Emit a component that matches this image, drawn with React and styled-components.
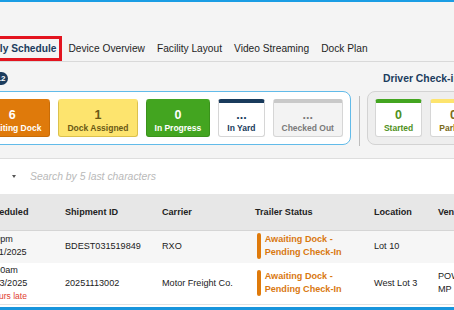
import React from "react";
import styled, { createGlobalStyle } from "styled-components";

const colors = {
  blue: "#1a9de4",
  navy: "#1b3c5e",
  text: "#222222",
  page: "#f4f4f4",
  orange: "#df7a0b",
};

const tones = {
  orange: { bg: "#df7a0b", border: "#c86c07", bar: "#df7a0b", text: "#ffffff" },
  yellow: { bg: "#fde46e", border: "#dcc14c", bar: "#fde46e", text: "#6a5915" },
  green: { bg: "#43a520", border: "#3a921b", bar: "#43a520", text: "#ffffff" },
  navy: { bg: "#ffffff", border: "#d6d6d6", bar: "#193b5c", text: "#193b5c" },
  gray: { bg: "#f3f3f3", border: "#d6d6d6", bar: "#c9c9c9", text: "#7a7a7a" },
  started: { bg: "#ffffff", border: "#d6d6d6", bar: "#43a520", text: "#4f901c" },
  parked: { bg: "#ffffff", border: "#d6d6d6", bar: "#fde46e", text: "#7b6a18" },
};

const GlobalStyle = createGlobalStyle`
  html, body {
    margin: 0;
    padding: 0;
    height: 100%;
    overflow: hidden;
    background: ${colors.page};
  }
  body {
    font-family: "Liberation Sans", Arial, sans-serif;
    color: ${colors.text};
  }
  #root {
    height: 100%;
  }
`;

const Shell = styled.div`
  height: 100%;
  box-sizing: border-box;
  border-top: 2px solid ${colors.blue};
  display: flex;
  flex-direction: column;
  overflow: hidden;
`;

// the page is scrolled a little to the right, so everything starts left of the window
const Canvas = styled.div`
  margin-left: -46px;
  flex: 1;
  min-height: 0;
  display: flex;
  flex-direction: column;
`;

const TabBar = styled.nav`
  display: flex;
  padding: 34px 0 0 24px;
  border-bottom: 1.5px solid #d9d9d9;
`;

const Tab = styled.div`
  height: 25px;
  box-sizing: border-box;
  display: flex;
  align-items: center;
  padding: 0 3px;
  border: 3px solid ${({ $active }) => ($active ? "#e3141f" : "transparent")};
  font-size: 10.2px;
  font-weight: ${({ $active }) => ($active ? 700 : 400)};
  color: ${({ $active }) => ($active ? colors.navy : "#1f1f1f")};
  white-space: nowrap;
`;

const Overview = styled.div`
  display: flex;
  align-items: flex-end;
  padding: 10px 0 13px 12px;
`;

const Section = styled.section`
  display: flex;
  flex-direction: column;
  flex-shrink: 0;
`;

const SectionHead = styled.div`
  height: 13px;
  display: flex;
  align-items: center;
  gap: 5px;
  margin-bottom: 6px;
  padding-left: ${({ $indent }) => $indent || 0}px;
  font-size: 10.4px;
  font-weight: 700;
  color: ${colors.navy};
  white-space: nowrap;
`;

const CountBadge = styled.span`
  height: 13px;
  min-width: 13px;
  box-sizing: border-box;
  padding: 0 3px;
  border-radius: 7px;
  background: ${colors.navy};
  color: #ffffff;
  font-size: 8px;
  line-height: 13px;
  text-align: center;
`;

const Panel = styled.div`
  display: flex;
  gap: 8px;
  padding: 7px;
  border-radius: 8px;
  border: 1.5px solid ${({ $tone }) => ($tone === "blue" ? "#62bbe9" : "#d3d3d3")};
  background: ${({ $tone }) => ($tone === "blue" ? "#ffffff" : "#eeeeee")};
`;

const Divider = styled.div`
  width: 1px;
  height: 50px;
  margin: 0 7px -1px 8px;
  background: #bdbdbd;
  flex-shrink: 0;
`;

const Card = styled.div`
  height: 38px;
  box-sizing: border-box;
  display: flex;
  flex-direction: column;
  align-items: center;
  padding: 6px 8px 0;
  border: 1px solid ${({ $tone }) => tones[$tone].border};
  border-top: 4px solid ${({ $tone }) => tones[$tone].bar};
  border-radius: 3px;
  background: ${({ $tone }) => tones[$tone].bg};
  color: ${({ $tone }) => tones[$tone].text};
  white-space: nowrap;
  flex-shrink: 0;
`;

const CardValue = styled.div`
  font-size: 12.5px;
  font-weight: 700;
  line-height: 13px;
`;

const CardLabel = styled.div`
  font-size: 8.5px;
  font-weight: 700;
  line-height: 13px;
`;

const SearchBar = styled.div`
  height: 35px;
  flex-shrink: 0;
  display: flex;
  align-items: center;
  gap: 14.5px;
  padding-left: 57.5px;
  background: #ffffff;
  border-top: 1px solid #dedede;
`;

const Caret = styled.span`
  width: 0;
  height: 0;
  border-left: 2.5px solid transparent;
  border-right: 2.5px solid transparent;
  border-top: 3px solid #555555;
`;

const SearchInput = styled.input`
  border: none;
  outline: none;
  background: transparent;
  padding: 0;
  width: 200px;
  font-family: "Liberation Sans", Arial, sans-serif;
  font-size: 10.4px;
  font-style: italic;
  &::placeholder {
    color: #b9b9b9;
  }
`;

const Table = styled.div`
  flex: 1;
  min-height: 0;
  overflow: hidden;
  background: #ffffff;
`;

const columns = "82.5px 97px 93px 119px 64px 70px";

const HeadRow = styled.div`
  display: grid;
  grid-template-columns: ${columns};
  align-items: center;
  height: 36px;
  padding-left: 20.5px;
  background: #e7e7e7;
  border-bottom: 1px solid #d5d5d5;
  font-size: 9.1px;
  font-weight: 700;
  white-space: nowrap;
`;

const Row = styled.div`
  display: grid;
  grid-template-columns: ${columns};
  align-items: center;
  min-height: 31.5px;
  box-sizing: border-box;
  padding: 1px 0 1px 20.5px;
  background: ${({ $shade }) => ($shade ? "#f6f6f6" : "#ffffff")};
  border-bottom: 1px solid ${({ $shade }) => ($shade ? "#f6f6f6" : "#e2e2e2")};
  font-size: 9.1px;
  line-height: 13px;
`;

const Cell = styled.div`
  padding-left: 8px;
  white-space: ${({ $wrap }) => ($wrap ? "normal" : "nowrap")};
`;

const Late = styled.div`
  color: #e0402f;
  font-size: 8.5px;
`;

const Status = styled.div`
  display: flex;
  gap: 3.7px;
  color: #d9780f;
  font-weight: 700;
  white-space: nowrap;
  &::before {
    content: "";
    width: 4px;
    margin: 0 0 0 2px;
    border-radius: 2px;
    background: ${colors.orange};
  }
`;

const BottomBar = styled.div`
  height: 3px;
  flex-shrink: 0;
  background: #1895dc;
`;

const tabs = ["Daily Schedule", "Device Overview", "Facility Layout", "Video Streaming", "Dock Plan"];

const yardCards = [
  { tone: "orange", value: "6", label: "Awaiting Dock" },
  { tone: "yellow", value: "1", label: "Dock Assigned" },
  { tone: "green", value: "0", label: "In Progress" },
  { tone: "navy", value: "...", label: "In Yard" },
  { tone: "gray", value: "...", label: "Checked Out" },
];

const driverCards = [
  { tone: "started", value: "0", label: "Started" },
  { tone: "parked", value: "0", label: "Parked" },
  { tone: "navy", value: "0", label: "Completed" },
];

const shipments = [
  {
    time: "3:30pm",
    date: "11/11/2025",
    id: "BDEST031519849",
    carrier: "RXO",
    location: "Lot 10",
    vendor: "",
  },
  {
    time: "10:00am",
    date: "11/13/2025",
    late: "2 hours late",
    id: "20251113002",
    carrier: "Motor Freight Co.",
    location: "West Lot 3",
    vendor: "POWERTECH MP",
  },
];

const App = () => {
  return (
    <>
      <GlobalStyle />
      <Shell>
        <Canvas>
          <TabBar>
            {tabs.map((tab, i) => (
              <Tab key={tab} $active={i === 0}>{tab}</Tab>
            ))}
          </TabBar>

          <Overview>
            <Section>
              <SectionHead>
                Yard
                <CountBadge>12</CountBadge>
              </SectionHead>
              <Panel $tone="blue">
                {yardCards.map(card => (
                  <Card key={card.label} $tone={card.tone}>
                    <CardValue>{card.value}</CardValue>
                    <CardLabel>{card.label}</CardLabel>
                  </Card>
                ))}
              </Panel>
            </Section>
            <Divider />
            <Section>
              <SectionHead $indent={16}>Driver Check-in Status</SectionHead>
              <Panel>
                {driverCards.map(card => (
                  <Card key={card.label} $tone={card.tone}>
                    <CardValue>{card.value}</CardValue>
                    <CardLabel>{card.label}</CardLabel>
                  </Card>
                ))}
              </Panel>
            </Section>
          </Overview>

          <SearchBar>
            <Caret />
            <SearchInput placeholder="Search by 5 last characters" />
          </SearchBar>

          <Table>
            <HeadRow>
              <Cell>Scheduled</Cell>
              <Cell>Shipment ID</Cell>
              <Cell>Carrier</Cell>
              <Cell>Trailer Status</Cell>
              <Cell>Location</Cell>
              <Cell>Vendor</Cell>
            </HeadRow>
            {shipments.map((s, i) => (
              <Row key={s.id} $shade={i % 2 === 0}>
                <Cell>
                  <div>{s.time}</div>
                  <div>{s.date}</div>
                  {s.late && <Late>{s.late}</Late>}
                </Cell>
                <Cell>{s.id}</Cell>
                <Cell>{s.carrier}</Cell>
                <Cell>
                  <Status>
                    <div>
                      Awaiting Dock -<br />
                      Pending Check-In
                    </div>
                  </Status>
                </Cell>
                <Cell>{s.location}</Cell>
                <Cell $wrap>{s.vendor}</Cell>
              </Row>
            ))}
          </Table>
        </Canvas>
        <BottomBar />
      </Shell>
    </>
  );
};

export default App;
